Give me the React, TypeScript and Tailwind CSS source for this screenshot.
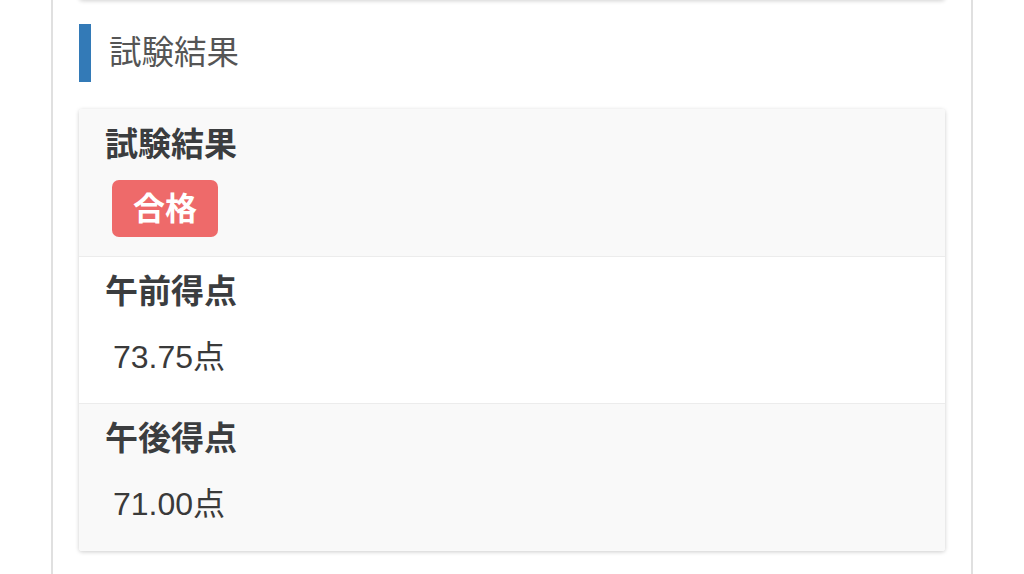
import React from 'react'

const FONT = { fontFamily: '"Liberation Sans", "Noto Sans CJK JP", sans-serif' }

// ── Result rows ───────────────────────────────────────────────────────────────
const scores = [
  { label: '午前得点', value: '73.75点', bg: 'bg-white' },
  { label: '午後得点', value: '71.00点', bg: 'bg-[#f9f9f9]' },
]

const App = () => {
  return (
    <div className="w-full min-h-[574px] bg-white" style={FONT}>
      <div className="mx-auto w-[922px] min-h-[574px] flex flex-col border-x-2 border-[#e0e0e0] px-[26px]">
        {/* previous card, scrolled off the top */}
        <div className="-mt-[40px] h-[40px] shrink-0 bg-white rounded shadow-[0_1px_4px_rgba(0,0,0,0.18)]" />

        {/* Section heading */}
        <div className="mt-[24px] flex items-center h-[58px] shrink-0">
          <div className="w-[12px] h-full bg-[#337ab7]" />
          <h2 className="ml-[18px] text-[32.5px] leading-none text-[#555] font-normal">試験結果</h2>
        </div>

        {/* Result card */}
        <div className="mt-[27px] shrink-0 rounded-[3px] overflow-hidden shadow-[0_1px_4px_rgba(0,0,0,0.2)]">
          <div className="bg-[#f9f9f9] pl-[26px] pt-[16px] pb-[20px] h-[148px] border-b border-[#ececec]">
            <div className="text-[33px] leading-[40px] font-bold text-[#3b3d3f]">試験結果</div>
            <span className="mt-[15px] ml-[7px] inline-flex items-center justify-center w-[106px] h-[57px] rounded-[7px] bg-[#ee6a6a] text-white text-[32px] font-bold">
              合格
            </span>
          </div>
          {scores.map((s, i) => (
            <div
              key={s.label}
              className={`${s.bg} pl-[26px] pt-[15px] h-[147px] ${i === 0 ? 'border-b border-[#ececec]' : ''}`}
            >
              <div className="text-[33px] leading-[40px] font-bold text-[#3b3d3f]">{s.label}</div>
              <div className="mt-[25px] ml-[8px] text-[32px] leading-[40px] text-[#3a3a3a]">{s.value}</div>
            </div>
          ))}
        </div>
      </div>
    </div>
  )
}

export default App
